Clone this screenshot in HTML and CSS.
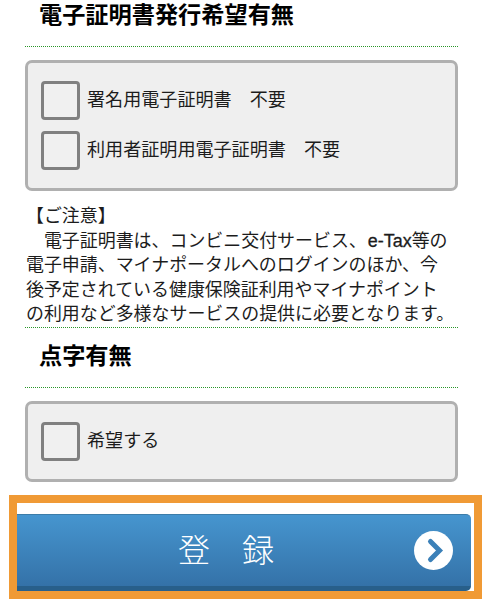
FILE: index.html
```html
<!DOCTYPE html>
<html lang="ja">
<head>
  <meta charset="UTF-8" />
  <title>電子証明書発行希望有無</title>
  <link rel="stylesheet" href="styles.css">
</head>
<body>

<section>
  <h2 class="first">電子証明書発行希望有無</h2>
  <div class="box">
    <label class="check"><input type="checkbox" />署名用電子証明書　不要</label>
    <label class="check"><input type="checkbox" />利用者証明用電子証明書　不要</label>
  </div>
  <p class="note">【ご注意】<br />
    　電子証明書は、コンビニ交付サービス、<span class="latin">e-Tax</span>等の<br />
    電子申請、マイナポータルへのログインのほか、今<br />
    後予定されている健康保険証利用やマイナポイント<br />
    の利用など多様なサービスの提供に必要となります。</p>
</section>

<section>
  <h2>点字有無</h2>
  <div class="box small">
    <label class="check"><input type="checkbox" />希望する</label>
  </div>
</section>

<div class="submit">
  <button class="btn" type="button">
    <span class="btn-text">登　録</span>
    <svg class="arrow" viewBox="0 0 39 39" width="39" height="39">
      <circle cx="19.5" cy="19.5" r="19.5" fill="#fff" />
      <path d="M16.5 10.5 L25.5 19.5 L16.5 28.5" fill="none" stroke="#3b80b8" stroke-width="5" stroke-linecap="round" stroke-linejoin="miter" />
    </svg>
  </button>
</div>

</body>
</html>
```

FILE: styles.css
```css
* {
  box-sizing: border-box;
}
body {
  width: 484px;
  height: 600px;
  margin: 0;
  overflow: hidden;
  background: #fff;
  color: #1c1c1c;
  font-family: "Liberation Sans", "Noto Sans CJK JP", sans-serif;
}
section {
  width: 433px;
  margin-left: 25px;
}
h2 {
  height: 60px;
  margin: 0 0 13px;
  padding-left: 14px;
  border-bottom: 1px dotted #2a962a;
  color: #000;
  font-size: 23.2px;
  font-weight: bold;
  line-height: 56px;
  white-space: nowrap;
}
h2.first {
  height: 47px;
  line-height: 31px;
}
.box {
  height: 131px;
  padding: 18px 13px;
  background: #efefef;
  border: 3px solid #b0b0b0;
  border-radius: 7px;
}
.box.small {
  height: 81px;
}
.check {
  display: flex;
  align-items: center;
  gap: 7px;
  height: 39px;
  margin-bottom: 11px;
  font-size: 18.08px;
  line-height: 39px;
  white-space: nowrap;
}
.check input {
  appearance: none;
  width: 39px;
  height: 39px;
  margin: 0;
  background: #f0f0f0;
  border: 3px solid #808080;
  border-radius: 4px;
}
.note {
  height: 124px;
  margin: 13px 0 0;
  padding-left: 1px;
  border-bottom: 1px dotted #2a962a;
  font-size: 17.95px;
  line-height: 24.6px;
  white-space: nowrap;
}
.latin {
  margin-left: 1px;
  -webkit-text-stroke: 0.3px #1c1c1c;
}
.submit {
  width: 473px;
  height: 104px;
  margin: 13px 0 0 9px;
  padding: 11px 3px 0 0;
  border: 8px solid #f09a35;
}
.btn {
  display: flex;
  align-items: center;
  justify-content: flex-end;
  width: 454px;
  height: 77px;
  padding: 0 18px 0 0;
  border: 0;
  border-top: 1px solid #3c7ca8;
  border-bottom: 5px solid #285f8a;
  border-radius: 0 5px 5px 0;
  background: linear-gradient(#4695cf, #3472a8);
  color: #fff;
  font-family: inherit;
}
.btn-text {
  flex: 1;
  padding-left: 21px;
  font-size: 32px;
  font-weight: 300;
  line-height: 40px;
  text-align: center;
}
.arrow {
  display: block;
}
```
